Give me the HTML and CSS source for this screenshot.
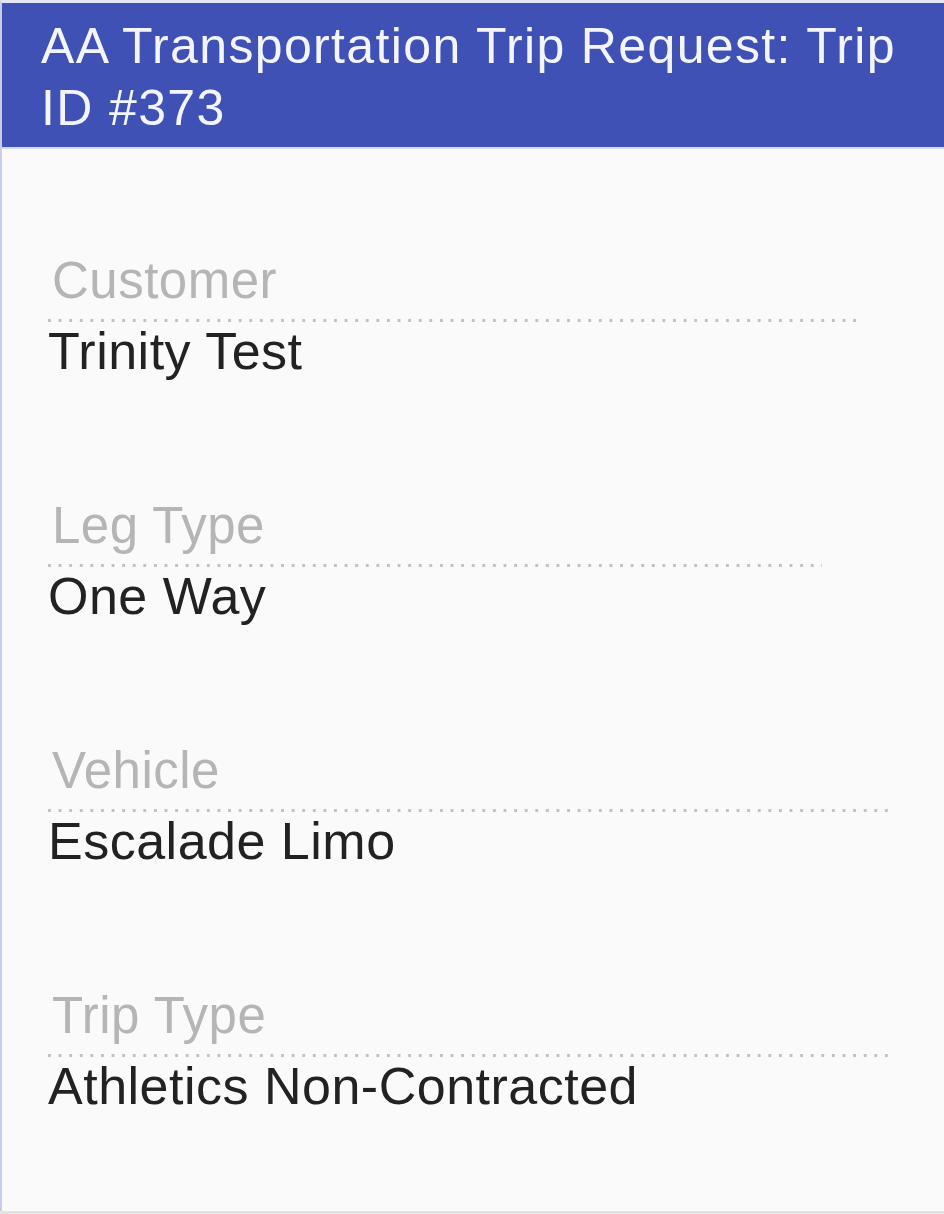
FILE: index.html
```html
<!DOCTYPE html>
<html>
<head>
<meta charset="utf-8">
<link rel="stylesheet" href="styles.css">
</head>
<body>
<div class="page">
  <div class="header">AA Transportation Trip Request: Trip ID #373</div>
  <div class="content">
    <div class="field">
      <div class="label">Customer</div>
      <div class="rule rule-customer"></div>
      <div class="value">Trinity Test</div>
    </div>
    <div class="field">
      <div class="label">Leg Type</div>
      <div class="rule rule-leg"></div>
      <div class="value">One Way</div>
    </div>
    <div class="field">
      <div class="label">Vehicle</div>
      <div class="rule rule-wide"></div>
      <div class="value">Escalade Limo</div>
    </div>
    <div class="field">
      <div class="label">Trip Type</div>
      <div class="rule rule-wide"></div>
      <div class="value">Athletics Non-Contracted</div>
    </div>
  </div>
</div>
</body>
</html>
```

FILE: styles.css
```css
html, body {
  margin: 0;
  padding: 0;
}
body {
  background: #e2e2e2;
  font-family: "Liberation Sans", Arial, sans-serif;
}
.page {
  width: 944px;
  height: 1211px;
  box-sizing: border-box;
  background: #fafafa;
  border-left: 2px solid #c8cdeb;
  border-top: 3px solid #e4e7f5;
  overflow: hidden;
}
.header {
  background: #3f51b5;
  color: #f4f5fc;
  font-size: 50px;
  letter-spacing: 1.36px;
  line-height: 62px;
  padding: 12px 30px 8px 41px;
  margin-left: -2px;
  border-bottom: 2px solid #d6daf0;
}
.content {
  padding: 102px 0 0 46px;
  display: flex;
  flex-direction: column;
  gap: 116px;
}
.field {
  display: flex;
  flex-direction: column;
}
.label {
  color: #b5b5b5;
  font-size: 51px;
  letter-spacing: 0.5px;
  line-height: 60px;
  padding-left: 4px;
}
.rule {
  height: 3px;
  margin-top: 8px;
  background-image: linear-gradient(to right, #c2c2c2 3px, transparent 3px);
  background-size: 10.6px 3px;
  background-repeat: repeat-x;
}
.rule-customer { width: 812px; }
.rule-leg { width: 774px; }
.rule-wide { width: 846px; }
.value {
  color: #222222;
  font-size: 52px;
  letter-spacing: 0.5px;
  line-height: 58px;
}
```
